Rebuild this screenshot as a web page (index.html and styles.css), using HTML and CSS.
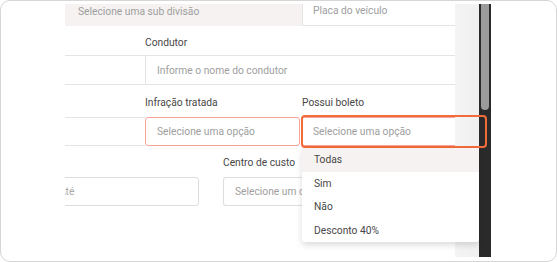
FILE: index.html
```html
<!DOCTYPE html>
<html lang="pt-BR">
<head>
<meta charset="utf-8">
<title>Filtros</title>
<link rel="stylesheet" href="styles.css">
</head>
<body>
<div class="frame">
  <div class="viewport">
    <div class="form">
      <div class="row row-top">
        <div class="field field-disabled">Selecione uma sub divisão</div>
        <div class="field field-plate">Placa do veículo</div>
      </div>
      <div class="labels labels-2"><span class="label">Condutor</span></div>
      <div class="row row-input">
        <div class="field stub"></div>
        <div class="field field-driver">Informe o nome do condutor</div>
      </div>
      <div class="labels labels-3"><span class="label label-inf">Infração tratada</span><span class="label">Possui boleto</span></div>
      <div class="row row-input row-sm">
        <div class="field stub"></div>
        <div class="field field-error field-inf">Selecione uma opção</div>
        <div class="field field-error field-open">Selecione uma opção</div>
      </div>
      <div class="labels labels-4"><span class="label">Centro de custo</span></div>
      <div class="row row-sm">
        <div class="field field-box field-date">Até</div>
        <div class="field field-box field-cost">Selecione um centro de custo</div>
      </div>
    </div>
    <div class="fade"></div>
  </div>
  <div class="scrollbar"><div class="thumb"></div></div>
  <div class="highlight"></div>
  <ul class="menu">
    <li class="menu-item active">Todas</li>
    <li class="menu-item">Sim</li>
    <li class="menu-item">Não</li>
    <li class="menu-item">Desconto 40%</li>
  </ul>
</div>
</body>
</html>
```

FILE: styles.css
```css
* { box-sizing: border-box; }
html, body { margin: 0; padding: 0; background: #ffffff; }
body { font-family: Roboto, "Liberation Sans", Arial, sans-serif; font-size: 10.25px; }

.frame {
  position: relative;
  width: 557px;
  height: 262px;
  border: 1px solid #d6d6d6;
  border-radius: 10px;
  padding: 3px 0 4px 64px;
  display: flex;
  background: #fff;
}

.viewport {
  position: relative;
  width: 414px;
  flex: none;
  overflow: hidden;
  background: #fff;
}

.form { margin-top: -8px; width: 440px; }

.row { display: flex; }
.row-top { height: 30px; }
.row-input { height: 30px; }
.row-sm { height: 29px; }

.field {
  display: flex;
  align-items: center;
  white-space: nowrap;
  color: #9e9e9e;
  overflow: hidden;
}

.field-disabled {
  width: 237px;
  background: #f5f2f1;
  padding-left: 13px;
}
.field-plate {
  flex: 1;
  border-left: 1px solid #e4e4e4;
  border-bottom: 1px solid #e4e4e4;
  padding-left: 10px;
}

.stub {
  width: 80px;
  border-top: 1px solid #e4e4e4;
  border-bottom: 1px solid #e4e4e4;
}
.field-driver {
  flex: 1;
  border: 1px solid #e4e4e4;
  padding-left: 11px;
}

.field-error {
  border: 1px solid #f4a596;
  border-radius: 3px;
  padding-left: 11px;
}
.field-inf { width: 155px; margin-right: 1px; }
.field-open { flex: 1; }

.field-box {
  border: 1px solid #dedede;
  border-radius: 3px;
  padding-left: 11px;
}
.field-date { width: 152px; margin-left: -18px; color: #a8a8a8; }
.field-cost { width: 80px; margin-left: 24px; border-right: none; border-radius: 3px 0 0 3px; }

.labels {
  display: flex;
  height: 14px;
  line-height: 14px;
  color: #474747;
  white-space: nowrap;
}
.labels-2 { margin: 10px 0 5px; padding-left: 80px; }
.labels-3 { margin: 11px 0 7px; padding-left: 80px; }
.labels-4 { margin: 10px 0 7px; padding-left: 158px; }
.label-inf { width: 157px; }

.fade {
  position: absolute;
  top: 0;
  right: 0;
  width: 24px;
  height: 100%;
  background: linear-gradient(to right, #f4f4f4, #f0f0f0);
}

.scrollbar {
  width: 12px;
  flex: none;
  background: #2a2a2a;
  padding: 0 2px;
}
.thumb {
  height: 106px;
  background: #9b9b9b;
  border-radius: 0 0 4px 4px;
}

.highlight {
  position: absolute;
  left: 300px;
  top: 114px;
  width: 186px;
  height: 33px;
  border: 2px solid #f26b3b;
  border-radius: 4px;
}

.menu {
  position: absolute;
  left: 301px;
  top: 147px;
  width: 177px;
  margin: 0;
  padding: 0;
  list-style: none;
  background: #fff;
  box-shadow: 0 3px 6px rgba(0, 0, 0, 0.14);
  border-radius: 0 0 3px 3px;
}
.menu-item {
  height: 23.5px;
  line-height: 23.5px;
  padding-left: 12px;
  color: #474747;
}
.menu-item.active { background: #f6f2f1; }
```
